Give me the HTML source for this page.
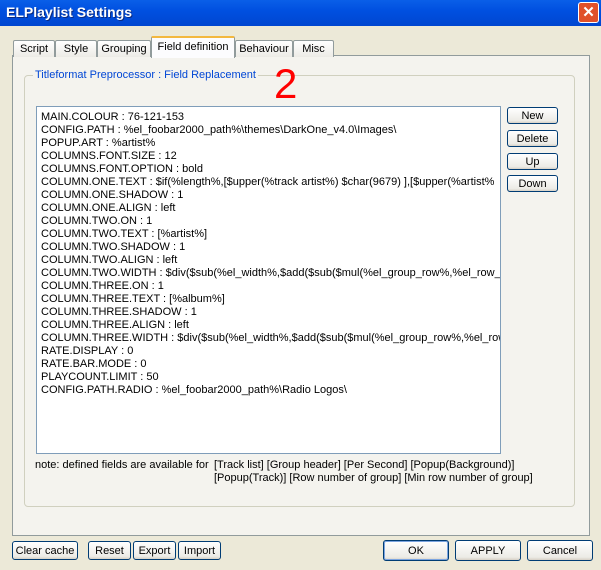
<!DOCTYPE html>
<html><head><style>
body{margin:0;width:601px;height:570px;background:#ece9d8;font-family:"Liberation Sans",sans-serif;font-size:11px;position:relative;overflow:hidden}
.a{position:absolute}
.title{left:0;top:0;width:601px;height:26px;background:linear-gradient(#0a5fe8,#0050e0 40%,#0046d0);}
.title span{position:absolute;left:6px;top:4px;color:#fff;font-weight:bold;font-size:14px;text-shadow:1px 1px #0a2a80}
.close{left:578px;top:2px;width:19px;height:19px;background:#e0502a;border:1px solid #fff;border-radius:3px;color:#fff;font-size:15px;line-height:19px;text-align:center;font-weight:bold}
.tab{top:40px;height:16px;border:1px solid #919b9c;border-bottom:none;background:linear-gradient(#fff,#ecebe6);text-align:center;line-height:17px;border-radius:2px 2px 0 0}
.tab.on{top:36px;height:20px;line-height:18px;background:#fcfcfe;border-top:2px solid #f3b83f;z-index:2}
.panel{left:12px;top:55px;width:576px;height:479px;border:1px solid #919b9c;background:#f4f3ee}
.grp{left:24px;top:75px;width:549px;height:430px;border:1px solid #d0d0bf;border-radius:4px}
.btn{border:1px solid #003c74;border-radius:3px;background:linear-gradient(#fff,#ecebe6 85%,#d6d0c5);text-align:center;box-sizing:border-box;font-size:11px}
.ta{left:36px;top:106px;width:465px;height:348px;border:1px solid #7f9db9;background:#fff;box-sizing:border-box;padding:4px 0 0 4px;line-height:13px;white-space:nowrap;overflow:hidden}
</style></head><body>
<div class="a title"><span>ELPlaylist Settings</span></div>
<div class="a close">✕</div>
<div class="a panel"></div>
<div class="a tab" style="left:13px;width:40px">Script</div>
<div class="a tab" style="left:55px;width:40px">Style</div>
<div class="a tab" style="left:97px;width:52px">Grouping</div>
<div class="a tab on" style="left:151px;width:82px">Field definition</div>
<div class="a tab" style="left:235px;width:56px">Behaviour</div>
<div class="a tab" style="left:293px;width:39px">Misc</div>
<div class="a grp"></div>
<div class="a" style="left:33px;top:69px;background:#f4f3ee;color:#0046d5;padding:0 2px">Titleformat Preprocessor : Field Replacement</div>
<div class="a" style="left:274px;top:63px;color:#f00;font-size:42px;line-height:42px">2</div>
<div class="a ta">MAIN.COLOUR : 76-121-153<br>CONFIG.PATH : %el_foobar2000_path%\themes\DarkOne_v4.0\Images\<br>POPUP.ART : %artist%<br>COLUMNS.FONT.SIZE : 12<br>COLUMNS.FONT.OPTION : bold<br>COLUMN.ONE.TEXT : $if(%length%,[$upper(%track artist%) $char(9679) ],[$upper(%artist%<br>COLUMN.ONE.SHADOW : 1<br>COLUMN.ONE.ALIGN : left<br>COLUMN.TWO.ON : 1<br>COLUMN.TWO.TEXT : [%artist%]<br>COLUMN.TWO.SHADOW : 1<br>COLUMN.TWO.ALIGN : left<br>COLUMN.TWO.WIDTH : $div($sub(%el_width%,$add($sub($mul(%el_group_row%,%el_row_<br>COLUMN.THREE.ON : 1<br>COLUMN.THREE.TEXT : [%album%]<br>COLUMN.THREE.SHADOW : 1<br>COLUMN.THREE.ALIGN : left<br>COLUMN.THREE.WIDTH : $div($sub(%el_width%,$add($sub($mul(%el_group_row%,%el_row<br>RATE.DISPLAY : 0<br>RATE.BAR.MODE : 0<br>PLAYCOUNT.LIMIT : 50<br>CONFIG.PATH.RADIO : %el_foobar2000_path%\Radio Logos\</div>
<div class="a btn" style="left:507px;top:107px;width:51px;height:17px;line-height:16px">New</div>
<div class="a btn" style="left:507px;top:130px;width:51px;height:17px;line-height:16px">Delete</div>
<div class="a btn" style="left:507px;top:153px;width:51px;height:17px;line-height:16px">Up</div>
<div class="a btn" style="left:507px;top:175px;width:51px;height:17px;line-height:16px">Down</div>
<div class="a" style="left:35px;top:459px">note: defined fields are available for</div>
<div class="a" style="left:214px;top:459px;line-height:13px">[Track list] [Group header] [Per Second] [Popup(Background)]<br>[Popup(Track)] [Row number of group] [Min row number of group]</div>
<div class="a btn" style="left:12px;top:541px;width:66px;height:19px;line-height:18px">Clear cache</div>
<div class="a btn" style="left:88px;top:541px;width:43px;height:19px;line-height:18px">Reset</div>
<div class="a btn" style="left:133px;top:541px;width:43px;height:19px;line-height:18px">Export</div>
<div class="a btn" style="left:178px;top:541px;width:43px;height:19px;line-height:18px">Import</div>
<div class="a btn" style="left:383px;top:540px;width:66px;height:21px;line-height:20px;box-shadow:inset 0 0 0 1px #7ba4e0">OK</div>
<div class="a btn" style="left:455px;top:540px;width:66px;height:21px;line-height:20px">APPLY</div>
<div class="a btn" style="left:527px;top:540px;width:66px;height:21px;line-height:20px">Cancel</div>
</body></html>
